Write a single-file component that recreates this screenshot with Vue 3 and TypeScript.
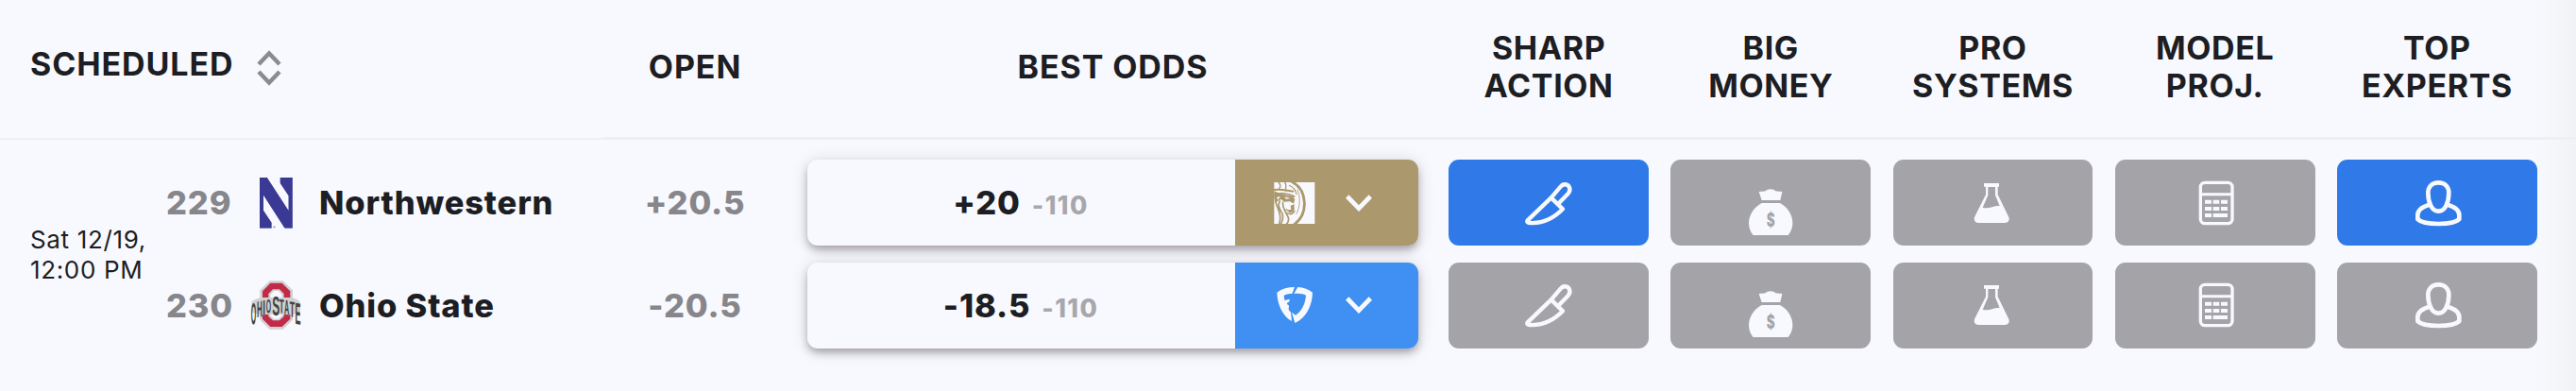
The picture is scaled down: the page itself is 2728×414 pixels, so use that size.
<script setup lang="ts">
type IconName = 'knife' | 'bag' | 'flask' | 'calculator' | 'expert'

interface Signal {
  icon: IconName
  label: string[]
  viewBox: string
}

interface Side {
  rotation: string
  team: string
  logo: 'northwestern' | 'ohio-state'
  open: string
  line: string
  juice: string
  book: 'betmgm' | 'fanduel'
  active: IconName[]
}

const signals: Signal[] = [
  { icon: 'knife', label: ['SHARP', 'ACTION'], viewBox: '0 -1 300 270' },
  { icon: 'bag', label: ['BIG', 'MONEY'], viewBox: '-16 -1 300 270' },
  { icon: 'flask', label: ['PRO', 'SYSTEMS'], viewBox: '1 -1 300 270' },
  { icon: 'calculator', label: ['MODEL', 'PROJ.'], viewBox: '-12 -1 300 270' },
  { icon: 'expert', label: ['TOP', 'EXPERTS'], viewBox: '3 -1 300 270' },
]

const sides: Side[] = [
  {
    rotation: '229', team: 'Northwestern', logo: 'northwestern', open: '+20.5',
    line: '+20', juice: '-110', book: 'betmgm', active: ['knife', 'expert'],
  },
  {
    rotation: '230', team: 'Ohio State', logo: 'ohio-state', open: '-20.5',
    line: '-18.5', juice: '-110', book: 'fanduel', active: [],
  },
]
</script>

<template>
  <div class="board">
    <div class="row head">
      <div class="cell scheduled">
        <span>SCHEDULED</span>
        <svg class="sort" viewBox="0 0 26 38" width="26" height="38">
          <path d="M2 15 L13 3.4 L24 15 M2 23 L13 34.6 L24 23" />
        </svg>
      </div>
      <div class="cell">OPEN</div>
      <div class="cell">BEST ODDS</div>
      <div v-for="s in signals" :key="s.icon" class="cell stacked">
        <span v-for="word in s.label" :key="word">{{ word }}</span>
      </div>
      <div class="cell"></div>
    </div>

    <div class="row body">
      <div class="matchup">
        <div class="time"><span>Sat 12/19,</span><span>12:00 PM</span></div>
        <div class="pair">
          <div v-for="side in sides" :key="side.team" class="line team">
            <span class="rotation">{{ side.rotation }}</span>
            <svg v-if="side.logo === 'northwestern'" class="logo" viewBox="42 66 168 162" width="56" height="54">
              <rect x="75" y="66" width="104.500" height="161" fill="#3a3a95" />
              <path class="paper" d="M98 65 H140 V84 L166.500 124 V170 Z" />
              <path class="paper" d="M87 122 L155 228 H113 V209 L87 170 Z" />
              <circle cx="121" cy="223" r="3.500" fill="#a5a5d2" />
            </svg>
            <svg v-else class="logo" viewBox="42 379 168 162" width="56" height="54">
              <path d="M107 383 H149 L180 413 V437 L200 446 L204 480 L180 490 V507 L149 537 H107 L76 507 V490 L50 480 L50 447 L76 437 V413 Z" fill="#cfd1d3" />
              <path d="M109 390 H146 L172 416 V504 L146 529 H109 L84 504 V416 Z" fill="#c22b48" />
              <path d="M117 410 H138 L152 424 V496 L138 509 H117 L103 496 V424 Z" fill="#cfd1d3" />
              <path class="paper" d="M120 415 H135 L146 427 V493 L135 504 H120 L109 493 V427 Z" />
              <path d="M50 452 L84 436 H172 L204 452 V484 L172 490 H84 L50 484 Z" fill="#cfd1d3" />
              <g class="arch">
                <text transform="translate(55.500 521) skewY(-10) scale(.22 1)" font-size="96">O</text>
                <text transform="translate(74.500 498) skewY(-8) scale(.34 1)" font-size="72">H</text>
                <text transform="translate(89 489) scale(.45 1)" font-size="67">I</text>
                <text transform="translate(103.500 485) skewY(-4) scale(.33 1)" font-size="62">O</text>
                <text transform="translate(127 494) scale(.4 1)" font-size="90">S</text>
                <text transform="translate(145 485) skewY(4) scale(.4 1)" font-size="62">T</text>
                <text transform="translate(161 490) skewY(5) scale(.33 1)" font-size="66">A</text>
                <text transform="translate(178 498) skewY(8) scale(.38 1)" font-size="70">T</text>
                <text transform="translate(196.500 521) skewY(10) scale(.28 1)" font-size="96">E</text>
              </g>
            </svg>
            <span class="name">{{ side.team }}</span>
          </div>
        </div>
      </div>

      <div class="pair">
        <div v-for="side in sides" :key="side.open" class="line open">{{ side.open }}</div>
      </div>

      <div class="pair best">
        <div v-for="side in sides" :key="side.book" class="line odds">
          <div class="price">
            <span>{{ side.line }}</span><span class="juice">{{ side.juice }}</span>
          </div>
          <div class="book" :class="side.book">
            <svg v-if="side.book === 'betmgm'" class="mark" viewBox="147 98 132 132" width="44" height="44">
              <rect class="paper" x="148" y="98" width="129" height="132" />
              <g fill="none" stroke="#ab986c" stroke-linecap="round">
                <path d="M204 96 C254 122 258 198 212 232" stroke-width="8.500" />
                <path d="M222 122 C231 142 232 176 219 198" stroke-width="2.500" />
                <path d="M182 98 C190 108 182 118 185 126 M162 98 C170 106 168 114 163 120" stroke-width="4" />
                <path d="M148 122 C166 118 186 124 208 127 M150 140 C166 130 190 132 211 143" stroke-width="6" />
                <path d="M196 108 C210 114 216 122 219 136" stroke-width="3.500" />
                <path d="M152 158 C158 182 174 200 164 230 M166 158 C157 174 168 186 174 198 C178 210 174 222 170 230" stroke-width="5" />
                <path d="M176 162 C172 182 192 200 194 214 C194 222 190 228 187 231" stroke-width="5" />
                <path d="M186 184 C192 190 204 190 211 182 M190 196 C200 202 208 198 213 190" stroke-width="4" />
              </g>
              <path d="M148 126 L168 134 L205 142 L214 152 L210 166 L198 159 L180 160 L170 152 L152 162 L148 150 Z" fill="#ab986c" />
              <path d="M200 172 L212 168 L211 190 L198 196 L190 188 L202 184 Z" fill="#ab986c" />
              <path class="paper" d="M156 145 L168 143 L160 154 Z M181 144 L200 149 L186 151 Z" />
            </svg>
            <svg v-else class="mark" viewBox="145 424 132 132" width="44" height="44">
              <path class="paper" d="M155 450 C171 438 190 433 211 433 L203 454 C192 454 183 456 177 460 L179 475 L196 471 L193 480 L186 484 L189 489 L193 491 L192 505 L199 513 L202 541 C172 524 156 487 155 450 Z" />
              <path class="paper" d="M221 433 C240 434 256 440 268 450 C267 493 247 531 212 547 L202 513 L214 522 C234 509 245 486 247 459 C237 454 225 452 209 454 Z" />
            </svg>
            <svg class="caret" viewBox="0 0 28 18" width="28" height="18">
              <path d="M1.700 2 L14 14.600 L26.300 2" />
            </svg>
          </div>
        </div>
      </div>

      <div v-for="s in signals" :key="s.icon" class="pair signal">
        <div
          v-for="side in sides"
          :key="side.team"
          class="line tile"
          :class="{ active: side.active.includes(s.icon) }"
        >
          <svg :viewBox="s.viewBox" width="100" height="90" class="glyph">
            <g v-if="s.icon === 'knife'" class="stroke" stroke-width="13">
              <path d="M160 115 L188 82 C196 71 211 73 216 84 C219 92 217 99 212 104 L180 137" />
              <path d="M158 117 L83 189 C80 194 84 197 92 197 C131 199 168 181 195 153 Z" />
            </g>
            <g v-else-if="s.icon === 'bag'">
              <path class="paper" d="M97 98 C104 96 111 98 118 96 C124 88 144 88 150 96 C157 98 165 96 171 98 L165 125 H106 Z" />
              <path class="paper" d="M106 134 H164 C191 149 204 174 204 198 C204 214 197 228 190 236 H79 C71 228 65 214 65 198 C65 174 79 149 106 134 Z" />
              <text class="dollar" transform="translate(134.500 208) scale(.68 1)">$</text>
            </g>
            <g v-else-if="s.icon === 'flask'">
              <path class="paper" fill-rule="evenodd" d="M124 71 H172 V82 H168 V107 L202 177 C208 188 201 197 190 197 H107 C96 197 90 188 95 177 L130 107 V82 H124 Z M137 83 V109 L120 148 C139 154 155 141 174 143 L160 109 V83 Z" />
            </g>
            <g v-else-if="s.icon === 'calculator'">
              <rect class="stroke" x="91" y="69" width="101" height="130" rx="14" stroke-width="10" />
              <path class="stroke" d="M92 106 H191" stroke-width="9" />
              <path class="stroke flat" d="M105 130.500 H126 M131 130.500 H151 M156 130.500 H177 M105 152 H126 M131 152 H151 M156 152 H177 M105 173 H126 M131 173 H177" stroke-width="12" />
            </g>
            <g v-else class="stroke" stroke-width="14">
              <path d="M157 69 C177 69 190 82 190 102 C190 130 179 160 157 160 C135 160 124 130 124 102 C124 82 137 69 157 69 Z" />
              <path d="M128 139 C108 145 91 157 91 172 V185 C111 205 203 205 223 185 V172 C223 157 206 145 186 139" />
            </g>
          </svg>
        </div>
      </div>
    </div>
  </div>
</template>

<style scoped>
.board {
  width: 2728px;
  height: 414px;
  overflow: hidden;
  color: #1d1e23;
  font-family: Inter, "Liberation Sans", sans-serif;
  background: linear-gradient(to right, #f8f9fe 2684px, #f6f7fb 2700px, #f1f2f6 2728px);
}
.row {
  display: grid;
  grid-template-columns: 637.5px 197px 688px repeat(5, 235.2px) 1fr;
}
.head {
  height: 148px;
  font-size: 34px;
  font-weight: 700;
  letter-spacing: 0.9px;
  line-height: 40px;
}
.cell {
  display: flex;
  align-items: center;
  justify-content: center;
  padding-bottom: 3px;
  border-bottom: 3px solid #eeeff3;
}
.scheduled {
  justify-content: flex-start;
  gap: 25px;
  padding: 0 0 3px 32px;
  border-bottom-width: 2px;
}
.scheduled span { padding-bottom: 7px; }
.stacked { flex-direction: column; letter-spacing: 0.6px; }
.sort path,
.caret path {
  fill: none;
  stroke: #8b8a8f;
  stroke-width: 4.4;
}
.caret path { stroke: #f8f9fe; stroke-width: 4.8; }

.body { padding-top: 21px; }
.matchup { display: flex; padding-left: 32px; }
.time {
  display: flex;
  flex-direction: column;
  justify-content: center;
  width: 144px;
  padding-top: 2px;
  font-size: 26px;
  line-height: 32px;
  letter-spacing: 0.65px;
  white-space: nowrap;
}
.pair { display: grid; grid-auto-rows: 91.4px; row-gap: 17.3px; }
.line { display: flex; align-items: center; }
.team,
.open,
.price {
  font-size: 34.5px;
  font-weight: 800;
  letter-spacing: 0.85px;
}
.rotation { width: 88px; color: #87868b; }
.logo { margin-right: 18px; }
.open { justify-content: center; color: #87868b; }
.arch text {
  font-family: "Liberation Sans", sans-serif;
  font-weight: 700;
  letter-spacing: 0;
  text-anchor: middle;
  fill: #45423f;
  stroke: #d4d5d6;
  stroke-width: 2;
  paint-order: stroke;
}

.best { padding: 0 20.5px 0 20px; }
.odds {
  overflow: hidden;
  align-items: stretch;
  border-radius: 11px;
  background: #f8f9fe;
  box-shadow: 0 5px 8px -1px rgba(25, 15, 25, 0.32), 0 2px 18px rgba(25, 15, 25, 0.15);
}
.price {
  display: flex;
  flex: 1;
  align-items: baseline;
  justify-content: center;
  line-height: 91.4px;
}
.juice {
  margin-left: 12px;
  color: #a8a7ac;
  font-size: 26.5px;
  letter-spacing: 1.4px;
}
.book {
  box-sizing: border-box;
  display: flex;
  align-items: center;
  width: 194.5px;
  padding-left: 41.5px;
}
.betmgm { background: #ab986c; }
.fanduel { background: #3f90f2; }
.caret { margin-left: 32px; }

.signal { padding: 0 11.7px; }
.tile {
  justify-content: center;
  border-radius: 11px;
  background: #a4a3a8;
}
.active { background: #2f7ae8; }
.paper { fill: #f8f9fe; }
.stroke {
  fill: none;
  stroke: #f8f9fe;
  stroke-linecap: round;
  stroke-linejoin: round;
}
.flat { stroke-linecap: butt; }
.dollar {
  fill: #a4a3a8;
  font-size: 60px;
  font-weight: 800;
  text-anchor: middle;
}
</style>

<style>
body { background: #f8f9fe; }
</style>
